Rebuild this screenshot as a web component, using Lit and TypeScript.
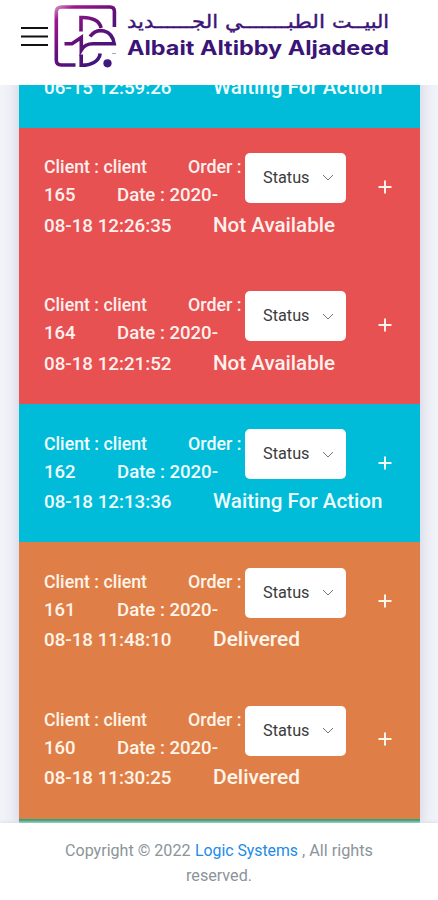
import { LitElement, html, svg, css } from "lit";
import { customElement } from "lit/decorators.js";

interface Order { id: string; date: string; time: string; state: string; stateWidth: number; tone: string; }

const orders: Order[] = [
  { id: "166", date: "2020-", time: "06-15 12:59:26", state: "Waiting For Action", stateWidth: 169.5, tone: "cyan" },
  { id: "165", date: "2020-", time: "08-18 12:26:35", state: "Not Available", stateWidth: 122, tone: "red" },
  { id: "164", date: "2020-", time: "08-18 12:21:52", state: "Not Available", stateWidth: 122, tone: "red" },
  { id: "162", date: "2020-", time: "08-18 12:13:36", state: "Waiting For Action", stateWidth: 169.5, tone: "cyan" },
  { id: "161", date: "2020-", time: "08-18 11:48:10", state: "Delivered", stateWidth: 87, tone: "orange" },
  { id: "160", date: "2020-", time: "08-18 11:30:25", state: "Delivered", stateWidth: 87, tone: "orange" },
];

// Text run set to a fixed measure; the baseline sits 6px above the box's bottom.
const run = (text: string, width: number, cls = "", height = 28) => html`
  <svg class="run ${cls}" width=${width} height=${height}>
    ${svg`<text x="0" y=${height - 6} textLength=${width} lengthAdjust="spacingAndGlyphs">${text}</text>`}
  </svg>`;

@customElement("app-root")
export class AppRoot extends LitElement {
  static styles = css`
    :host { display: flex; flex-direction: column; height: 900px; overflow: hidden; background: #fff; font-family: Roboto, "Noto Sans", sans-serif; }
    svg { display: block; flex: none; }
    .run { overflow: visible; fill: currentColor; }
    header { height: 85.3px; flex: none; display: flex; align-items: flex-start; box-sizing: border-box; padding: 0 0 0 20px; }
    .menu { margin-top: 25px; }
    .mark { margin: 0 0 0 4px; }
    .brand { margin: 7px 0 0 10px; color: #3b1478; }
    .words { display: flex; gap: 7px; }
    .arabic { font: 500 18.5px "DejaVu Sans", sans-serif; stroke: currentColor; stroke-width: 0.4; }
    .latin { font: 700 19.5px Inter, sans-serif; }
    main { height: 738px; flex: none; overflow: hidden; background: #f2f3f9; }
    .list { width: 400.6px; margin: -95.6px 0 0 19.4px; box-shadow: 0 0 14px #c8cadd; }
    .row { height: 138.2px; box-sizing: border-box; padding: 23.3px 0 0 24.6px; display: grid; grid-template-columns: 201px 101.5px 1fr; grid-template-rows: 28px 28px 30px; font-size: 19px; font-weight: 500; }
    .cyan { background: #00bcd9; color: #f0fdff; }
    .red { background: #e75151; color: #fff0ee; }
    .orange { background: #df7f47; color: #fff5ea; }
    .green { background: #2b9f72; }
    .line { display: flex; justify-content: flex-start; }
    .one { gap: 41.5px; }
    .two { gap: 42px; }
    .three { grid-column: 1 / -1; gap: 42px; padding-top: 2.5px; }
    .state { font-size: 21px; }
    button { font: inherit; border: 0; }
    .status { grid-column: 2; grid-row: 1 / 3; margin-top: 1.8px; height: 50px; padding: 0 12px 0 18px; background: #fff; border-radius: 5px; display: flex; align-items: center; justify-content: space-between; color: #3b3b3b; font-size: 17px; font-weight: 400; }
    .status .run { margin-top: -2px; }
    .plus { grid-column: 3; grid-row: 1 / 3; padding: 0 0 0 32px; margin-top: 28.5px; background: none; color: inherit; height: 14px; }
    .tail { height: 8px; }
    footer { flex: 1; display: flex; flex-direction: column; align-items: center; box-shadow: 0 -1px 3px #dcdfe8; position: relative; color: #8b9499; font-size: 17px; }
    .copy { display: flex; gap: 4.3px; margin-top: 10.5px; }
    .rest { margin-top: -2.5px; }
    .link { color: #208be8; text-decoration: none; }
  `;

  private row(o: Order) {
    return html`<section class="row ${o.tone}">
      <div class="line one">${run("Client : client", 103)}${run("Order :", 53.5)}</div>
      <div class="line two">${run(o.id, 31.5)}${run("Date : " + o.date, 101)}</div>
      <button class="status">${run("Status", 46.5, "", 24)}
        <svg width="12" height="7" viewBox="0 0 12 7"><path d="M1 1l5 5 5-5" fill="none" stroke="#777" /></svg>
      </button>
      <button class="plus" aria-label="Expand"><svg width="14" height="14"><path d="M7 0.5v13M.5 7h13" stroke="currentColor" stroke-width="2" /></svg></button>
      <div class="line three">${run(o.time, 127.5)}${run(o.state, o.stateWidth, "state")}</div>
    </section>`;
  }

  render() {
    return html`
      <header>
        <svg class="menu" width="29" height="24"><path d="M1 3h27M1 11.5h27M1 20h27" stroke="#111" stroke-width="2" /></svg>
        <svg class="mark" width="64" height="72" viewBox="0 0 64 72">
          <defs><linearGradient id="ink" gradientUnits="userSpaceOnUse" x1="6" y1="4" x2="54" y2="66"><stop offset="0" stop-color="#cf8fc6" /><stop offset=".14" stop-color="#a0168c" /><stop offset=".5" stop-color="#651079" /><stop offset="1" stop-color="#34187c" /></linearGradient></defs>
          <g fill="none" stroke="url(#ink)" stroke-width="3.6">
            <path d="M61.4 27V11.5Q61.4 7 57 7H8.500Q3.300 7 3.300 12V60q0 5 5 5H22.500" />
            <path d="M28 31.500V17.500C39 17 47 21 48 28" />
            <path d="M37 36.500C44 27 59 29 61.200 43.800H40C34 43.800 31 45.500 28.300 50V37.500L19 43.800H11.500" />
            <path d="M28.200 54.500V65.300C38 65.500 46 61.500 47.200 53.500" />
          </g>
          <circle cx="54.5" cy="63.300" r="4.100" fill="#41187e" />
          <path d="M59 53.5h4" stroke="#aaa0c4" stroke-width="1" />
        </svg>
        <div class="brand">
          <div class="words">
            ${run("الجــــــديد", 91, "arabic", 27)}
            ${run("الطبـــــــي", 100, "arabic", 27)}
            ${run("البيــت", 57, "arabic", 27)}
          </div>
          ${run("Albait Altibby Aljadeed", 262, "latin", 27)}
        </div>
      </header>
      <main><div class="list">${orders.map((o) => this.row(o))}<div class="tail green"></div></div></main>
      <footer>
        <div class="copy">${run("Copyright © 2022", 125.5)}<a class="link">${run("Logic Systems", 103)}</a>${run(", All rights", 71)}</div>
        <div class="rest">${run("reserved.", 66)}</div>
      </footer>`;
  }
}
